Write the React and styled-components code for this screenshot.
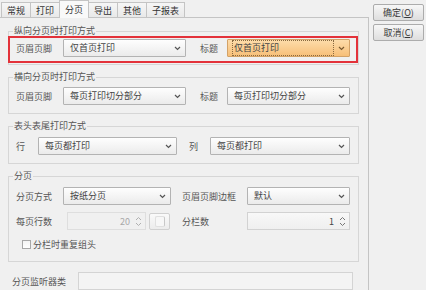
import styled, { createGlobalStyle } from "styled-components";

const GlobalStyle = createGlobalStyle`
  html, body {
    margin: 0;
    padding: 0;
    background: #f0f0f0;
  }
  body {
    font-family: "Noto Sans CJK SC", "Noto Sans", sans-serif;
    font-size: 9px;
    color: #4a4a4a;
  }
  * {
    box-sizing: border-box;
  }
`;

const Window = styled.div`
  display: flex;
  width: 426px;
  height: 290px;
  overflow: hidden;
  background: #f0f0f0;
`;

const Main = styled.div`
  display: flex;
  flex-direction: column;
  width: 369px;
  flex-shrink: 0;
`;

const TabBar = styled.div`
  display: flex;
  align-items: flex-end;
  height: 17px;
  padding-left: 1px;
  position: relative;
  z-index: 1;
`;

const Tab = styled.div`
  display: flex;
  align-items: center;
  justify-content: center;
  height: ${(p) => (p.$active ? 18 : 15)}px;
  margin-bottom: ${(p) => (p.$active ? -1 : 0)}px;
  margin-left: -1px;
  padding: 0 5px;
  border: 1px solid #c4c4c4;
  border-bottom: none;
  background: ${(p) =>
    p.$active ? "#f9f9f9" : "linear-gradient(#f6f6f6, #e9e9e9)"};
  color: #333;
  line-height: 1;
  &:first-child {
    margin-left: 0;
  }
`;

const Panel = styled.div`
  flex: 1;
  border-top: 1px solid #c4c4c4;
  border-right: 1px solid #c4c4c4;
  padding: 13px 0 0 8px;
`;

const Group = styled.div`
  width: 351px;
  border: 1px solid #d6d6d6;
  margin-top: ${(p) => p.$mt || 0}px;
`;

const Legend = styled.div`
  width: fit-content;
  height: 12px;
  line-height: 12px;
  margin: -7px 0 0 4px;
  padding: 0 1px;
  background: #f0f0f0;
  color: #555;
`;

const Body = styled.div`
  display: flex;
  flex-direction: column;
  gap: 7px;
  padding: ${(p) => p.$pt}px 0 ${(p) => p.$pb}px 7px;
`;

const Highlight = styled.div`
  width: 350px;
  margin: -1px 0 1px -1px;
  padding: 1px 0 4px 6px;
  border: 2px solid #e3323a;
`;

const Row = styled.div`
  display: flex;
  align-items: center;
  height: ${(p) => p.$h || 18}px;
`;

const Label = styled.span`
  width: ${(p) => p.$w}px;
  margin-left: ${(p) => p.$ml || 0}px;
  flex-shrink: 0;
  white-space: nowrap;
  color: #555;
`;

const Select = styled.div`
  display: flex;
  align-items: center;
  width: ${(p) => p.$w}px;
  height: 18px;
  flex-shrink: 0;
  padding: 0 4px 0 6px;
  border: 1px solid ${(p) => (p.$focus ? "#d3a267" : "#b3b3b3")};
  border-radius: 1px;
  background: ${(p) =>
    p.$focus
      ? "linear-gradient(#fddcaa, #f7bf78)"
      : "linear-gradient(#fefefe, #ebebeb)"};
  color: #444;
`;

const SelectText = styled.span`
  flex: 1;
  height: 12px;
  line-height: 12px;
  white-space: nowrap;
  outline: ${(p) => (p.$focus ? "1px dotted #8a6a40" : "none")};
  outline-offset: 1px;
  margin-right: 6px;
`;

const SpinBox = styled.div`
  display: flex;
  align-items: center;
  justify-content: flex-end;
  gap: 5px;
  width: ${(p) => p.$w}px;
  height: 18px;
  flex-shrink: 0;
  padding-right: 3px;
  border: 1px solid ${(p) => (p.$disabled ? "#dedede" : "#d2d2d2")};
  background: ${(p) =>
    p.$disabled ? "#f0f0f0" : "linear-gradient(#f8f8f8, #efefef)"};
  color: ${(p) => (p.$disabled ? "#a8a8a8" : "#444")};
`;

const SquareButton = styled.div`
  display: flex;
  align-items: center;
  justify-content: center;
  width: 21px;
  height: 17px;
  margin-left: 3px;
  flex-shrink: 0;
  border: 1px solid #d0d0d0;
  border-radius: 2px;
  background: linear-gradient(#fafafa, #ececec);
`;

const SquareInner = styled.div`
  width: 10px;
  height: 11px;
  border: 1px solid #e0e0e0;
  border-right-color: #c8c8c8;
  border-radius: 2px;
  background: #f7f7f7;
`;

const Checkbox = styled.span`
  width: 9px;
  height: 9px;
  margin: 0 2px 0 6px;
  border: 1px solid #a8a8a8;
  background: linear-gradient(#f4f4f4, #ffffff);
`;

const BottomRow = styled.div`
  display: flex;
  align-items: center;
  height: 18px;
  margin: 10px 0 0 4px;
`;

const TextInput = styled.div`
  width: 275px;
  height: 18px;
  border: 1px solid #d4d4d4;
  background: #f4f4f4;
`;

const Side = styled.div`
  display: flex;
  flex-direction: column;
  gap: 3px;
  padding: 4px 0 0 4px;
`;

const Button = styled.div`
  display: flex;
  align-items: center;
  justify-content: center;
  width: 51px;
  height: 17px;
  border: 1px solid #acacac;
  border-radius: 2px;
  background: linear-gradient(#f7f7f7, #dedede);
  color: #3a3a3a;
  u {
    text-decoration: underline;
  }
`;

function Chevron({ color = "#555" }) {
  return (
    <svg width="7" height="5" viewBox="0 0 7 5">
      <path d="M1 1 L3.5 3.5 L6 1" fill="none" stroke={color} strokeWidth="1.2" />
    </svg>
  );
}

function SpinArrows({ color }) {
  return (
    <svg width="7" height="11" viewBox="0 0 7 11">
      <path d="M1 4 L3.5 1.5 L6 4" fill="none" stroke={color} strokeWidth="1" />
      <path d="M1 7 L3.5 9.5 L6 7" fill="none" stroke={color} strokeWidth="1" />
    </svg>
  );
}

function Combo({ w, value, focus }) {
  return (
    <Select $w={w} $focus={focus}>
      <SelectText $focus={focus}>{value}</SelectText>
      <Chevron color={focus ? "#7a5a30" : "#555"} />
    </Select>
  );
}

const tabs = ["常规", "打印", "分页", "导出", "其他", "子报表"];

export default function App() {
  return (
    <>
      <GlobalStyle />
      <Window>
        <Main>
          <TabBar>
            {tabs.map((t) => (
              <Tab key={t} $active={t === "分页"}>
                {t}
              </Tab>
            ))}
          </TabBar>
          <Panel>
            <Group>
              <Legend>纵向分页时打印方式</Legend>
              <Highlight>
                <Row>
                  <Label $w={47}>页眉页脚</Label>
                  <Combo w={123} value="仅首页打印" />
                  <Label $w={27} $ml={14}>
                    标题
                  </Label>
                  <Combo w={123} value="仅首页打印" focus />
                </Row>
              </Highlight>
            </Group>

            <Group $mt={12}>
              <Legend>横向分页时打印方式</Legend>
              <Body $pt={4} $pb={8}>
                <Row>
                  <Label $w={47}>页眉页脚</Label>
                  <Combo w={123} value="每页打印切分部分" />
                  <Label $w={27} $ml={14}>
                    标题
                  </Label>
                  <Combo w={123} value="每页打印切分部分" />
                </Row>
              </Body>
            </Group>

            <Group $mt={12}>
              <Legend>表头表尾打印方式</Legend>
              <Body $pt={5} $pb={8}>
                <Row>
                  <Label $w={22}>行</Label>
                  <Combo w={139} value="每页都打印" />
                  <Label $w={21} $ml={12}>
                    列
                  </Label>
                  <Combo w={140} value="每页都打印" />
                </Row>
              </Body>
            </Group>

            <Group $mt={12}>
              <Legend>分页</Legend>
              <Body $pt={5} $pb={10}>
                <Row>
                  <Label $w={47}>分页方式</Label>
                  <Combo w={108} value="按纸分页" />
                  <Label $w={65} $ml={11}>
                    页眉页脚边框
                  </Label>
                  <Combo w={103} value="默认" />
                </Row>
                <Row>
                  <Label $w={51}>每页行数</Label>
                  <SpinBox $w={79} $disabled>
                    <span>20</span>
                    <SpinArrows color="#b0b0b0" />
                  </SpinBox>
                  <SquareButton>
                    <SquareInner />
                  </SquareButton>
                  <Label $w={65} $ml={12}>
                    分栏数
                  </Label>
                  <SpinBox $w={103}>
                    <span>1</span>
                    <SpinArrows color="#777" />
                  </SpinBox>
                </Row>
                <Row $h={14}>
                  <Checkbox />
                  <Label>分栏时重复组头</Label>
                </Row>
              </Body>
            </Group>

            <BottomRow>
              <Label $w={66}>分页监听器类</Label>
              <TextInput />
            </BottomRow>
          </Panel>
        </Main>
        <Side>
          <Button>
            确定(<u>O</u>)
          </Button>
          <Button>
            取消(<u>C</u>)
          </Button>
        </Side>
      </Window>
    </>
  );
}
